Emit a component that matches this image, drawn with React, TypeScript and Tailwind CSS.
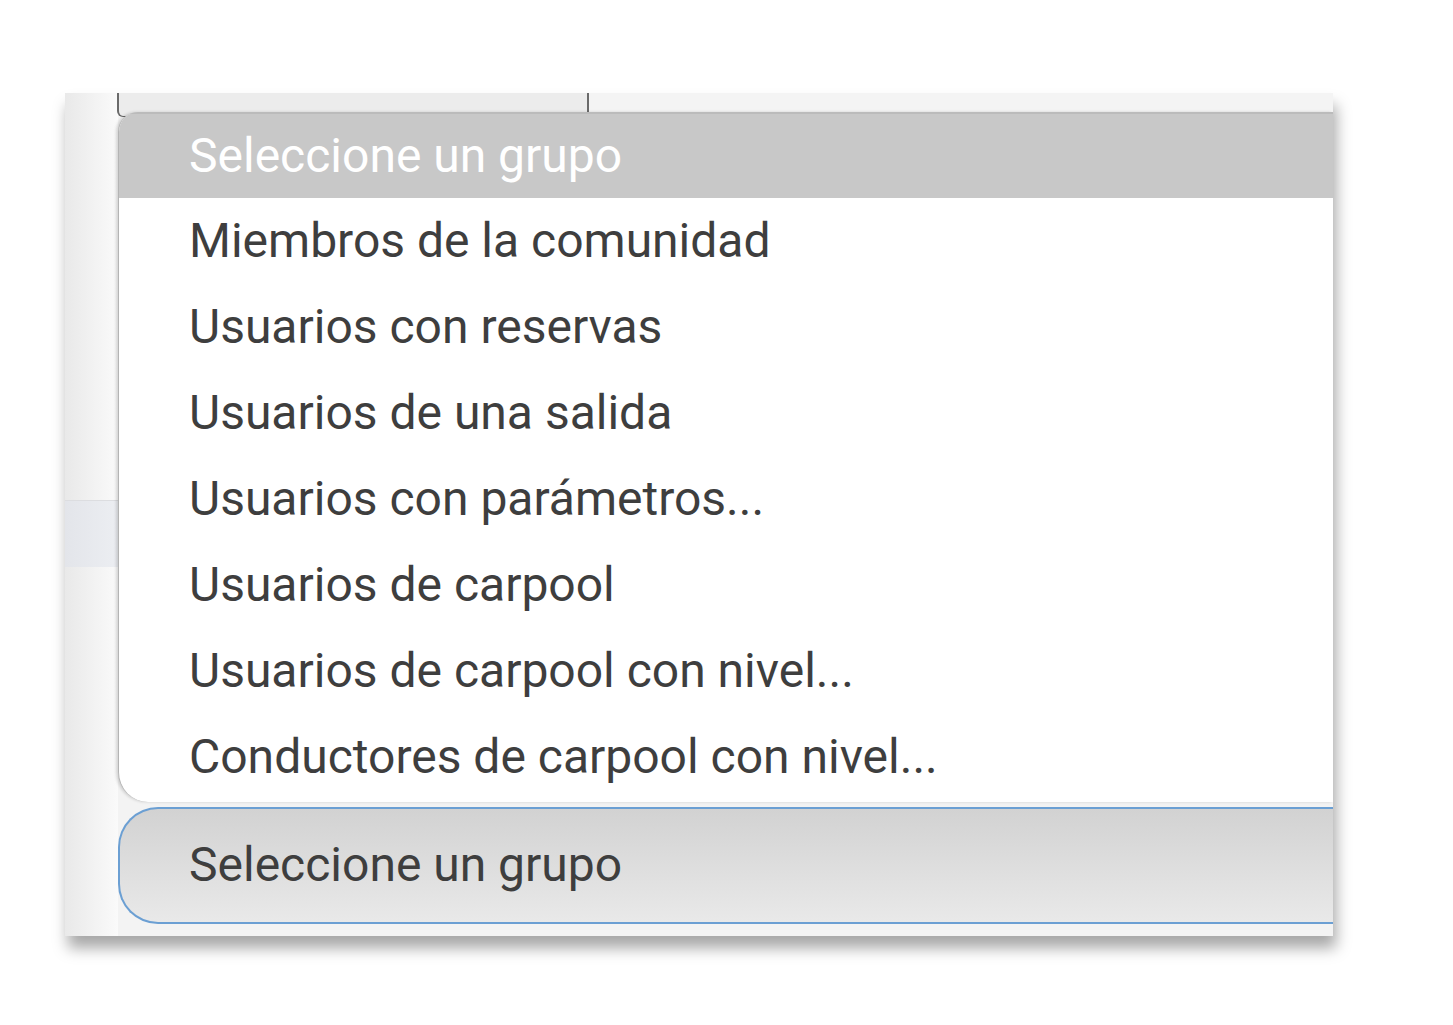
import React from "react";

const items = [
  "Miembros de la comunidad",
  "Usuarios con reservas",
  "Usuarios de una salida",
  "Usuarios con parámetros...",
  "Usuarios de carpool",
  "Usuarios de carpool con nivel...",
  "Conductores de carpool con nivel...",
];

export default function App() {
  return (
    <div
      className="w-[1453px] h-[1025px] bg-white pt-[93px] pl-[65px]"
      style={{ fontFamily: "Roboto, 'Noto Sans', sans-serif" }}
    >
      <div className="w-[1268px] h-[843px] bg-[#f3f3f3] flex shadow-[3px_12px_14px_rgba(0,0,0,0.35)] overflow-hidden">
        {/* left strip */}
        <div className="w-[53px] h-full flex flex-col bg-gradient-to-r from-[#e9e9e9] to-[#fafafa]">
          <div className="h-[407px]" />
          <div className="h-[67px] bg-gradient-to-r from-[#e3e5ea] to-[#eceef2] border-t border-[#dcdde0]" />
          <div className="flex-1" />
        </div>
        {/* main column */}
        <div className="flex-1 flex flex-col">
          <div className="h-[19px] flex">
            <div className="w-[472px] h-[24px] bg-[#ececec] border-l-2 border-r-2 border-b border-[#6a6a6a] rounded-bl-[6px] -ml-[1px]" />
            <div className="flex-1 bg-[#f4f4f4]" />
          </div>
          <div className="relative h-[690px] bg-white rounded-tl-[20px] rounded-bl-[30px] border-l border-[#b4b4b4] overflow-hidden shadow-[-2px_0_3px_rgba(0,0,0,0.15)]">
            <div className="h-[86px] bg-[#c8c8c8] border-t-2 border-[#bbbbbb] flex items-center pl-[70px] text-white text-[48px] leading-none">
              Seleccione un grupo
            </div>
            {items.map((t) => (
              <div
                key={t}
                className="h-[86px] flex items-center pl-[70px] text-[#3e3e3e] text-[48px] leading-none"
              >
                {t}
              </div>
            ))}
          </div>
          <div className="h-[5px]" />
          <div className="h-[117px] rounded-l-[40px] border-2 border-r-0 border-[#6b9fd3] bg-gradient-to-b from-[#d2d2d2] to-[#e9e9e9] flex items-center pl-[69px] pb-[2px] text-[#3e3e3e] text-[48px] leading-none">
            Seleccione un grupo
          </div>
          <div className="flex-1" />
        </div>
      </div>
    </div>
  );
}
